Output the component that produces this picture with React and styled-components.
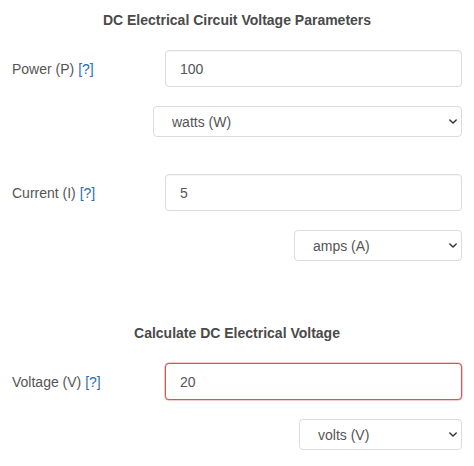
import React from "react"
import styled, { createGlobalStyle } from "styled-components"

const GlobalStyle = createGlobalStyle`
    body {
        margin: 0;
        background: #fff;
        font-family: "Liberation Sans", Arial, sans-serif;
    }
`

export default function App(){
    return(
        <Page>
            <GlobalStyle/>
            <Title>DC Electrical Circuit Voltage Parameters</Title>
            <Field>
                <Label>Power (P) <Help>[?]</Help></Label>
                <Input defaultValue="100"/>
            </Field>
            <UnitRow>
                <SelectWrap $width={309}>
                    <Select defaultValue="W">
                        <option value="W">watts (W)</option>
                    </Select>
                    <Chevron/>
                </SelectWrap>
            </UnitRow>
            <Field $top={37}>
                <Label>Current (I) <Help>[?]</Help></Label>
                <Input defaultValue="5"/>
            </Field>
            <UnitRow>
                <SelectWrap $width={168}>
                    <Select defaultValue="A">
                        <option value="A">amps (A)</option>
                    </Select>
                    <Chevron/>
                </SelectWrap>
            </UnitRow>
            <Title $top={64}>Calculate DC Electrical Voltage</Title>
            <Field>
                <Label>Voltage (V) <Help>[?]</Help></Label>
                <Input defaultValue="20" $invalid/>
            </Field>
            <UnitRow>
                <SelectWrap $width={163}>
                    <Select defaultValue="V">
                        <option value="V">volts (V)</option>
                    </Select>
                    <Chevron/>
                </SelectWrap>
            </UnitRow>
        </Page>
    )
}

function Chevron(){
    return(
        <ChevronIcon viewBox="0 0 10 6" width="8" height="5">
            <path d="M1 1l4 4 4-4" fill="none" stroke="#333" strokeWidth="1.8" strokeLinecap="round" strokeLinejoin="round"/>
        </ChevronIcon>
    )
}

const Page = styled.div`
    display: flex;
    flex-direction: column;
    width: 474px;
    padding: 12px 12px 0 12px;
    box-sizing: border-box;
    color: #555;
    font-size: 14px;
`

const Title = styled.h3`
    margin: ${p => p.$top || 0}px 0 0 0;
    height: 16px;
    line-height: 16px;
    text-align: center;
    font-size: 14px;
    font-weight: 700;
    color: #4a4a4a;
`

const Field = styled.div`
    display: flex;
    align-items: center;
    margin-top: ${p => p.$top || 22}px;
`

const Label = styled.label`
    width: 153px;
    font-size: 14px;
    color: #555;
`

const Help = styled.span`
    color: #2a6db0;
`

const Input = styled.input`
    flex: 1;
    height: 37px;
    box-sizing: border-box;
    padding: 0 14px;
    border: 1px solid ${p => p.$invalid ? "#dd5252" : "#dcdcdc"};
    border-radius: 4px;
    box-shadow: ${p => p.$invalid ? "0 0 0 0.5px rgba(221, 82, 82, 0.6)" : "inset 0 1px 1px rgba(0, 0, 0, 0.04)"};
    font-family: inherit;
    font-size: 14px;
    color: #555;
    outline: none;
`

const UnitRow = styled.div`
    display: flex;
    justify-content: flex-end;
    margin-top: 19px;
`

const SelectWrap = styled.div`
    position: relative;
    width: ${p => p.$width}px;
    height: 31px;
`

const Select = styled.select`
    appearance: none;
    width: 100%;
    height: 100%;
    box-sizing: border-box;
    padding: 0 18px;
    border: 1px solid #dcdcdc;
    border-radius: 4px;
    background: #fff;
    font-family: inherit;
    font-size: 14px;
    color: #555;
    outline: none;
`

const ChevronIcon = styled.svg`
    position: absolute;
    right: 5px;
    top: 13px;
    pointer-events: none;
`
